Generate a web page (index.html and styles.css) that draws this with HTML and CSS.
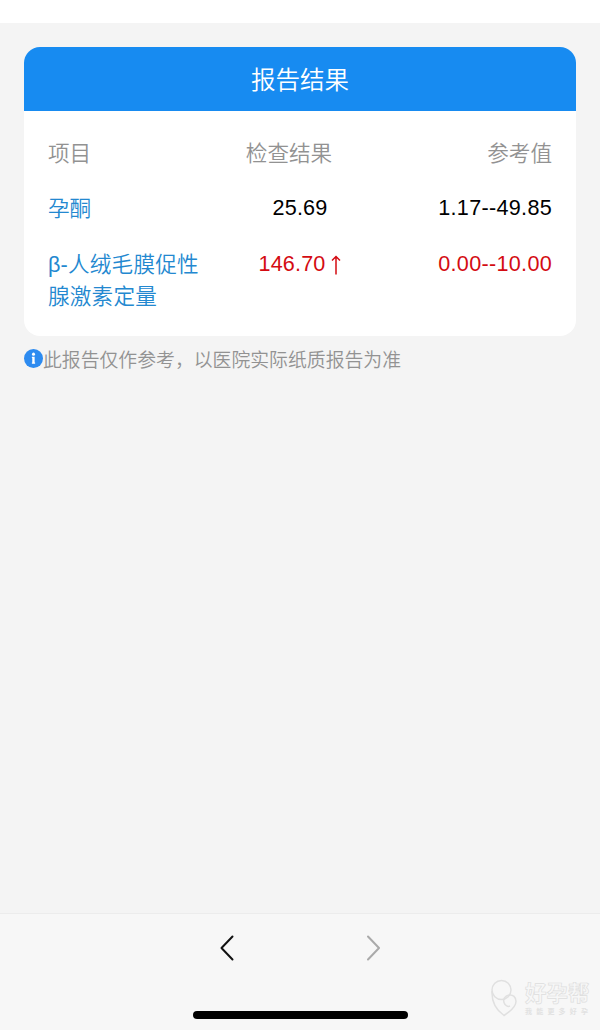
FILE: index.html
```html
<!DOCTYPE html>
<html lang="zh-CN">
<head>
<meta charset="utf-8">
<title>报告结果</title>
<link rel="stylesheet" href="styles.css">
</head>
<body>
<div class="screen">
  <div class="top-strip"></div>
  <main class="content">
    <section class="card">
      <h1 class="card-title">报告结果</h1>
      <div class="results">
        <div class="row head"><span class="name">项目</span><span class="value">检查结果</span><span class="range">参考值</span></div>
        <div class="row"><span class="name">孕酮</span><span class="value">25.69</span><span class="range">1.17--49.85</span></div>
        <div class="row high"><span class="name compound">β-人绒毛膜促性腺激素定量</span><span class="value">146.70<svg class="up" viewBox="0 0 10 20"><path d="M5 19.500V1.500M1 5.500L5 1.500L9 5.500"/></svg></span><span class="range">0.00--10.00</span></div>
      </div>
    </section>
    <p class="note"><svg class="info" viewBox="0 0 20 20"><circle cx="10" cy="10" r="10"/><circle class="mark" cx="10" cy="5.400" r="1.600"/><path class="mark" d="M8.300 8.200h2.900v6h.5v1.300H8.300v-1.300h.4V9.500h-.4z"/></svg><span>此报告仅作参考，以医院实际纸质报告为准</span></p>
  </main>
  <footer class="toolbar">
    <nav class="nav">
      <svg class="chevron" viewBox="0 0 14 26"><path d="M12.500 1.500L1.500 13L12.500 24.500"/></svg>
      <svg class="chevron off" viewBox="0 0 14 26"><path d="M1 1.500L12 13L1 24.500"/></svg>
    </nav>
    <div class="home-bar"></div>
    <div class="watermark">
      <svg class="logo" viewBox="0 0 28 38"><circle cx="11.500" cy="11" r="9.500"/><path d="M2 12C1.500 22 6 31 14 36.500C21 32 26 28 26 22.500C26 18 23 15.500 19 16C14.500 17 13 20 14 23.500C15 27 18 28 20 27"/></svg>
      <div><div class="brand">好孕帮</div><div class="slogan">我能更多好孕</div></div>
    </div>
  </footer>
</div>
</body>
</html>
```
FILE: styles.css
```css
* { box-sizing: border-box; }
body { margin: 0; font-family: "Liberation Sans", "Noto Sans CJK SC", sans-serif; }
.screen { width: 600px; height: 1030px; display: flex; flex-direction: column; background: #f4f4f4; overflow: hidden; }
.top-strip { height: 23px; background: #fff; }
.content { flex: 1; padding: 24px 24px 0; }
.card { height: 289px; border-radius: 16px; background: #fff; overflow: hidden; }
.card-title { margin: 0; height: 64px; padding-top: 2px; line-height: 64px; text-align: center; font-size: 24.5px; font-weight: 350; color: #fff; background: #178bf1; }
.results { padding: 25px 24px 0; }
.row { display: grid; grid-template-columns: 168px 168px 168px; font-size: 21.6px; line-height: 32px; margin-bottom: 24px; color: #000; }
.name { color: #2388d0; font-weight: 350; padding-top: 1px; margin-bottom: -1px; }
.compound { letter-spacing: 0.2px; }
.value { text-align: center; letter-spacing: 0.15px; }
.range { text-align: right; letter-spacing: 0.3px; }
.head, .head .name { color: #929292; font-weight: 350; }
.head span { padding-top: 2px; margin-bottom: -2px; letter-spacing: 0; }
.head .value { padding-right: 22px; }
.high .value, .high .range { color: #d40b12; }
.up { width: 10px; height: 20px; margin-left: 6px; vertical-align: -4px; fill: none; stroke: currentColor; stroke-width: 1.5; }
.note { display: flex; align-items: center; margin: 9px 0 0; height: 28px; font-size: 18.85px; line-height: 28px; font-weight: 350; color: #929292; white-space: nowrap; }
.note span { padding-top: 3px; }
.info { width: 19px; height: 19px; fill: #2d8bf0; margin-top: -2px; }
.info .mark { fill: #fff; }
.toolbar { position: relative; height: 117px; border-top: 1px solid #ececec; background: #f7f7f7; }
.nav { display: flex; justify-content: space-between; padding: 21px 219.5px 0; }
.chevron { width: 14px; height: 26px; fill: none; stroke: #111; stroke-width: 2; stroke-linecap: round; stroke-linejoin: round; }
.off { stroke: #aaa; }
.home-bar { width: 215px; height: 7.5px; margin: 50px auto 0; border-radius: 4px; background: #000; }
.watermark { position: absolute; left: 490px; top: 65px; display: flex; gap: 7px; color: #e2e2e2; }
.logo { width: 28px; height: 38px; fill: none; stroke: #e0e0e0; stroke-width: 1.5; }
.brand { padding-top: 2px; font-size: 21.5px; line-height: 27px; font-weight: 700; color: #f7f7f7; -webkit-text-stroke: 0.7px #dedede; }
.slogan { font-size: 7px; line-height: 7px; letter-spacing: 4.2px; font-weight: 700; white-space: nowrap; }
```
